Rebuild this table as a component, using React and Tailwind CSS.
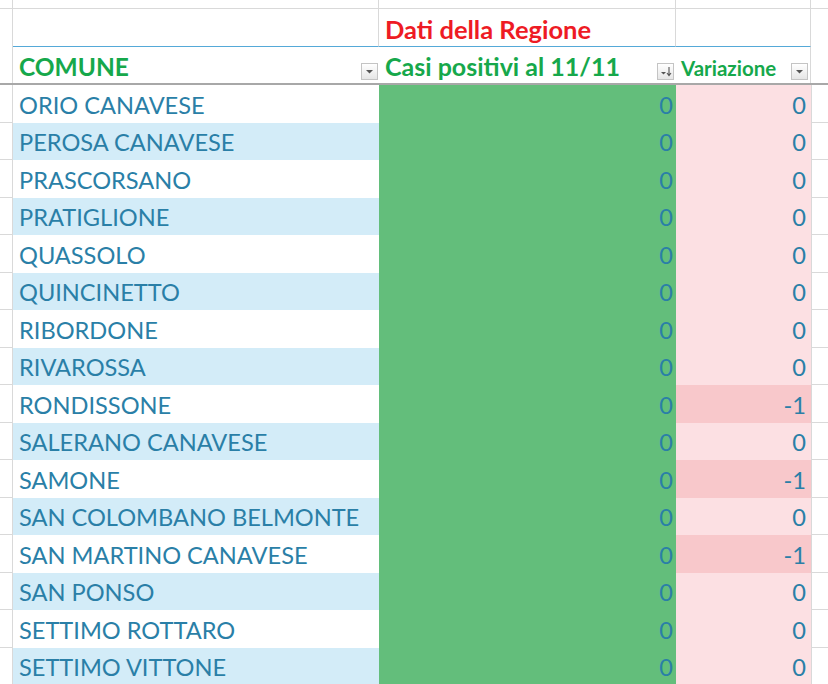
const rows = [
  { name: 'ORIO CANAVESE', casi: 0, varz: 0 },
  { name: 'PEROSA CANAVESE', casi: 0, varz: 0 },
  { name: 'PRASCORSANO', casi: 0, varz: 0 },
  { name: 'PRATIGLIONE', casi: 0, varz: 0 },
  { name: 'QUASSOLO', casi: 0, varz: 0 },
  { name: 'QUINCINETTO', casi: 0, varz: 0 },
  { name: 'RIBORDONE', casi: 0, varz: 0 },
  { name: 'RIVAROSSA', casi: 0, varz: 0 },
  { name: 'RONDISSONE', casi: 0, varz: -1 },
  { name: 'SALERANO CANAVESE', casi: 0, varz: 0 },
  { name: 'SAMONE', casi: 0, varz: -1 },
  { name: 'SAN COLOMBANO BELMONTE', casi: 0, varz: 0 },
  { name: 'SAN MARTINO CANAVESE', casi: 0, varz: -1 },
  { name: 'SAN PONSO', casi: 0, varz: 0 },
  { name: 'SETTIMO ROTTARO', casi: 0, varz: 0 },
  { name: 'SETTIMO VITTONE', casi: 0, varz: 0 },
]

const cols = 'grid grid-cols-[13px_366px_297px_135px_1fr]'

function FilterButton({ sorted }) {
  return (
    <div className="w-[17px] h-[17px] border border-[#c4c4c4] bg-gradient-to-b from-white to-[#e6e6e6] flex items-center justify-center">
      {sorted ? (
        <svg width="13" height="11" viewBox="0 0 13 11">
          <path d="M2 6h5l-2.5 2.5z" fill="#555" />
          <path d="M10 1v8M8 7l2 2.5L12 7" stroke="#555" strokeWidth="1.1" fill="none" />
        </svg>
      ) : (
        <svg width="9" height="5" viewBox="0 0 9 5">
          <path d="M1 1h7L4.5 4.5z" fill="#555" />
        </svg>
      )}
    </div>
  )
}

export default function App() {
  return (
    <div className="w-[828px] h-[684px] overflow-hidden bg-white font-['Lato',sans-serif] text-[#2a7fa7]">
      <div className={`${cols} h-[9px]`}>
        <div className="border-r border-b border-[#d9d9d9]" />
        <div className="border-r border-b border-[#d9d9d9]" />
        <div className="border-r border-b border-[#d9d9d9]" />
        <div className="border-r border-b border-[#d9d9d9]" />
        <div className="border-b border-[#d9d9d9]" />
      </div>

      <div className={`${cols} h-[38px]`}>
        <div className="border-r border-[#d9d9d9]" />
        <div className="border-r border-b border-r-[#d9d9d9] border-b-[#55a9d8]" />
        <div className="border-r border-b border-r-[#d9d9d9] border-b-[#55a9d8] flex items-end pl-[6px] pb-[4px]">
          <span className="text-[25.5px] font-bold text-[#ee1b24] leading-none">Dati della Regione</span>
        </div>
        <div className="border-r border-b border-r-[#d9d9d9] border-b-[#55a9d8]" />
        <div />
      </div>

      <div className={`${cols} h-[38px] border-b-2 border-[#a8a8a8]`}>
        <div className="border-r border-[#d9d9d9]" />
        <div className="flex items-end justify-between pl-[6px] pr-[1px] pb-[3px]">
          <span className="text-[24.5px] font-bold text-[#16a84b] leading-none mb-[1px]">COMUNE</span>
          <FilterButton />
        </div>
        <div className="flex items-end justify-between pl-[6px] pr-[2px] pb-[3px]">
          <span className="text-[25px] font-bold text-[#16a84b] leading-none mb-[1px]">Casi positivi al 11/11</span>
          <FilterButton sorted />
        </div>
        <div className="flex items-end justify-between pl-[5px] pr-[2px] pb-[3px] border-r border-[#d9d9d9]">
          <span className="text-[20.5px] font-bold text-[#16a84b] leading-none mb-[2px]">Variazione</span>
          <FilterButton />
        </div>
        <div />
      </div>

      {rows.map((r, i) => (
        <div key={r.name} className={`${cols} h-[37.5px] text-[23.6px] leading-none`}>
          <div className="border-r border-b border-[#d9d9d9]" />
          <div className={`${i % 2 ? 'bg-[#d3ecf8]' : 'bg-white'} flex items-end pl-[6px] pb-[5px]`}>
            {r.name}
          </div>
          <div className="bg-[#63be7b] flex items-end justify-end pr-[3px] pb-[5px]">{r.casi}</div>
          <div className={`${r.varz < 0 ? 'bg-[#f8c8cb]' : 'bg-[#fce0e3]'} flex items-end justify-end pr-[5px] pb-[5px]`}>
            {r.varz}
          </div>
          <div className="border-l border-b border-[#d9d9d9]" />
        </div>
      ))}
    </div>
  )
}
